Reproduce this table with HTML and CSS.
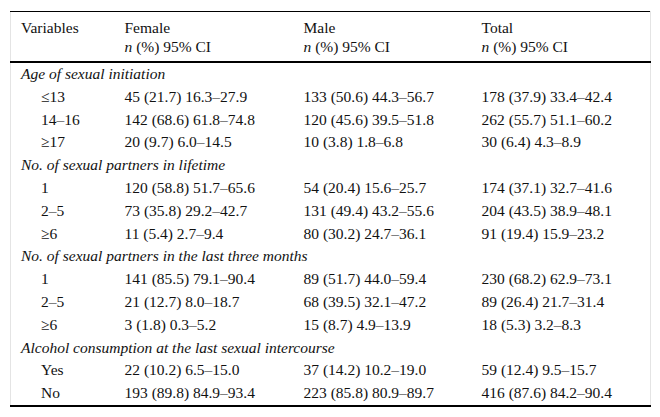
FILE: index.html
```html
<!DOCTYPE html>
<html>
<head>
<meta charset="utf-8">
<link rel="stylesheet" href="styles.css">
</head>
<body>
<div class="wrap">
<table class="data">
  <colgroup>
    <col class="c1"><col class="c2"><col class="c3"><col class="c4">
  </colgroup>
  <thead>
    <tr>
      <th>Variables</th>
      <th>Female<br><i>n</i> (%) 95% CI</th>
      <th>Male<br><i>n</i> (%) 95% CI</th>
      <th>Total<br><i>n</i> (%) 95% CI</th>
    </tr>
  </thead>
  <tbody>
    <tr><td class="cat" colspan="4">Age of sexual initiation</td></tr>
    <tr><td class="ind">≤13</td><td>45 (21.7) 16.3–27.9</td><td>133 (50.6) 44.3–56.7</td><td>178 (37.9) 33.4–42.4</td></tr>
    <tr><td class="ind">14–16</td><td>142 (68.6) 61.8–74.8</td><td>120 (45.6) 39.5–51.8</td><td>262 (55.7) 51.1–60.2</td></tr>
    <tr><td class="ind">≥17</td><td>20 (9.7) 6.0–14.5</td><td>10 (3.8) 1.8–6.8</td><td>30 (6.4) 4.3–8.9</td></tr>
    <tr><td class="cat" colspan="4">No. of sexual partners in lifetime</td></tr>
    <tr><td class="ind">1</td><td>120 (58.8) 51.7–65.6</td><td>54 (20.4) 15.6–25.7</td><td>174 (37.1) 32.7–41.6</td></tr>
    <tr><td class="ind">2–5</td><td>73 (35.8) 29.2–42.7</td><td>131 (49.4) 43.2–55.6</td><td>204 (43.5) 38.9–48.1</td></tr>
    <tr><td class="ind">≥6</td><td>11 (5.4) 2.7–9.4</td><td>80 (30.2) 24.7–36.1</td><td>91 (19.4) 15.9–23.2</td></tr>
    <tr><td class="cat" colspan="4">No. of sexual partners in the last three months</td></tr>
    <tr><td class="ind">1</td><td>141 (85.5) 79.1–90.4</td><td>89 (51.7) 44.0–59.4</td><td>230 (68.2) 62.9–73.1</td></tr>
    <tr><td class="ind">2–5</td><td>21 (12.7) 8.0–18.7</td><td>68 (39.5) 32.1–47.2</td><td>89 (26.4) 21.7–31.4</td></tr>
    <tr><td class="ind">≥6</td><td>3 (1.8) 0.3–5.2</td><td>15 (8.7) 4.9–13.9</td><td>18 (5.3) 3.2–8.3</td></tr>
    <tr><td class="cat" colspan="4">Alcohol consumption at the last sexual intercourse</td></tr>
    <tr><td class="ind">Yes</td><td>22 (10.2) 6.5–15.0</td><td>37 (14.2) 10.2–19.0</td><td>59 (12.4) 9.5–15.7</td></tr>
    <tr><td class="ind">No</td><td>193 (89.8) 84.9–93.4</td><td>223 (85.8) 80.9–89.7</td><td>416 (87.6) 84.2–90.4</td></tr>
  </tbody>
</table>
</div>
</body>
</html>
```

FILE: styles.css
```css
html, body {
  margin: 0;
  padding: 0;
  background: #fff;
}
.wrap {
  padding: 11px 10px 0 10px;
}
.data {
  width: 640px;
  border-collapse: collapse;
  table-layout: fixed;
  font-family: "Liberation Serif", "Times New Roman", serif;
  font-size: 15.5px;
  color: #111;
  border-top: 1px solid #000;
  border-bottom: 2px solid #000;
  border-left: 1px solid #e4e4e4;
  border-right: 1px solid #e4e4e4;
}
.c1 { width: 104px; }
.c2 { width: 179px; }
.c3 { width: 178px; }
.c4 { width: 179px; }
.data th {
  font-weight: normal;
  text-align: left;
  vertical-align: top;
  line-height: 19px;
  padding: 6px 10px 5px 10px;
  border-bottom: 2px solid #000;
}
.data td {
  line-height: 22.8px;
  padding: 0 10px;
  white-space: nowrap;
}
.data td.cat {
  font-style: italic;
}
.data td.ind {
  padding-left: 30px;
}
```
